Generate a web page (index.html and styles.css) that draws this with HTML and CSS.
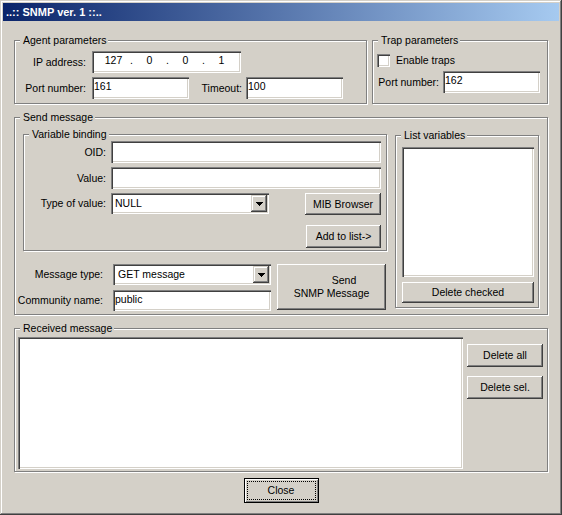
FILE: index.html
```html
<!DOCTYPE html>
<html lang="en">
<head>
    <meta charset="UTF-8">
    <title>SNMP ver. 1</title>
    <link rel="stylesheet" href="styles.css">
</head>
<body>
    <div class="window">
        <div class="titlebar">..:: SNMP ver. 1 ::..</div>
        <div class="client">
            <div class="top-row">
                <div class="group agent">
                    <span class="legend">Agent parameters</span>
                    <div class="row ip-row">
                        <span class="label lbl-agent">IP address:</span>
                        <div class="edit ip">
                            <span class="oct">127</span><span class="dot">.</span><span class="oct">0</span><span class="dot">.</span><span class="oct">0</span><span class="dot">.</span><span class="oct">1</span>
                        </div>
                    </div>
                    <div class="row">
                        <span class="label lbl-agent">Port number:</span>
                        <div class="edit port">161</div>
                        <span class="label lbl-timeout">Timeout:</span>
                        <div class="edit port">100</div>
                    </div>
                </div>
                <div class="group trap">
                    <span class="legend">Trap parameters</span>
                    <div class="row check-row">
                        <span class="checkbox"></span>
                        <span>Enable traps</span>
                    </div>
                    <div class="row">
                        <span class="label lbl-trap">Port number:</span>
                        <div class="edit port">162</div>
                    </div>
                </div>
            </div>

            <div class="group send">
                <span class="legend">Send message</span>
                <div class="send-left">
                    <div class="group binding">
                        <span class="legend">Variable binding</span>
                        <div class="row gap4">
                            <span class="label lbl-bind">OID:</span>
                            <div class="edit wide"></div>
                        </div>
                        <div class="row gap4">
                            <span class="label lbl-bind">Value:</span>
                            <div class="edit wide"></div>
                        </div>
                        <div class="row top">
                            <span class="label lbl-bind type-label">Type of value:</span>
                            <div class="combo">
                                <span class="combo-text">NULL</span>
                                <span class="combo-btn"><svg width="7" height="4" viewBox="0 0 7 4" shape-rendering="crispEdges"><rect x="0" y="0" width="7" height="1"/><rect x="1" y="1" width="5" height="1"/><rect x="2" y="2" width="3" height="1"/><rect x="3" y="3" width="1" height="1"/></svg></span>
                            </div>
                            <div class="button mib-btn">MIB Browser</div>
                        </div>
                        <div class="button add-btn">Add to list-&gt;</div>
                    </div>
                    <div class="msg-area">
                        <div class="msg-fields">
                            <div class="row gap5">
                                <span class="label lbl-msg">Message type:</span>
                                <div class="combo">
                                    <span class="combo-text msg-text">GET message</span>
                                    <span class="combo-btn"><svg width="7" height="4" viewBox="0 0 7 4" shape-rendering="crispEdges"><rect x="0" y="0" width="7" height="1"/><rect x="1" y="1" width="5" height="1"/><rect x="2" y="2" width="3" height="1"/><rect x="3" y="3" width="1" height="1"/></svg></span>
                                </div>
                            </div>
                            <div class="row">
                                <span class="label lbl-msg">Community name:</span>
                                <div class="edit community">public</div>
                            </div>
                        </div>
                        <div class="button send-btn">
                            <div class="send-lines">
                                <span class="send-first">Send</span>
                                <span>SNMP Message</span>
                            </div>
                        </div>
                    </div>
                </div>
                <div class="group list-vars">
                    <span class="legend">List variables</span>
                    <div class="listbox"></div>
                    <div class="button del-checked">Delete checked</div>
                </div>
            </div>

            <div class="group received">
                <span class="legend">Received message</span>
                <div class="edit message-box"></div>
                <div class="received-buttons">
                    <div class="button side-btn">Delete all</div>
                    <div class="button side-btn second">Delete sel.</div>
                </div>
            </div>

            <div class="button close-btn"><span class="focus">Close</span></div>
        </div>
    </div>
</body>
</html>
```

FILE: styles.css
```css
* {
    box-sizing: border-box;
}

body {
    margin: 0;
    background-color: #d4d0c8;
    font-family: "Liberation Sans", Arial, sans-serif;
    font-size: 10.5px;
    line-height: 13px;
    color: #000;
    white-space: nowrap;
}

.window {
    width: 562px;
    height: 515px;
    padding: 3px;
    background-color: #d4d0c8;
    box-shadow: inset -1px -1px 0 #404040, inset 1px 1px 0 #d4d0c8,
                inset -2px -2px 0 #808080, inset 2px 2px 0 #fff;
}

.titlebar {
    height: 18px;
    margin-bottom: 1px;
    padding-left: 3px;
    line-height: 18px;
    font-size: 11px;
    font-weight: bold;
    color: #fff;
    background: linear-gradient(to right, #0a246a, #a6caf0);
}

.client {
    padding: 18px 11px 0;
}

/* group boxes */
.group {
    position: relative;
    border: 1px solid #808080;
    box-shadow: inset 1px 1px 0 #fff, 1px 1px 0 #fff;
}

.legend {
    position: absolute;
    top: -7px;
    left: 5px;
    padding: 0 2px 0 3px;
    background-color: #d4d0c8;
}

.row {
    display: flex;
    align-items: center;
}

.row.top {
    align-items: flex-start;
}

.label {
    text-align: right;
}

.edit {
    height: 22px;
    padding: 3px 2px 0;
    background-color: #fff;
    box-shadow: inset 1px 1px 0 #808080, inset 2px 2px 0 #404040,
                inset -1px -1px 0 #fff, inset -2px -2px 0 #d4d0c8;
}

.button {
    display: flex;
    align-items: center;
    justify-content: center;
    background-color: #d4d0c8;
    box-shadow: inset -1px -1px 0 #404040, inset 1px 1px 0 #fff,
                inset -2px -2px 0 #808080, inset 2px 2px 0 #d4d0c8;
}

.combo {
    display: flex;
    width: 158px;
    height: 21px;
    padding: 2px;
    background-color: #fff;
    box-shadow: inset 1px 1px 0 #808080, inset 2px 2px 0 #404040,
                inset -1px -1px 0 #fff, inset -2px -2px 0 #d4d0c8;
}

.combo-text {
    flex: 1;
    padding: 2px 0 0 2px;
}

.msg-text {
    padding-left: 3px;
}

.combo-btn {
    display: flex;
    align-items: center;
    justify-content: center;
    width: 16px;
    height: 17px;
    padding-top: 1px;
    background-color: #d4d0c8;
    box-shadow: inset -1px -1px 0 #404040, inset 1px 1px 0 #d4d0c8,
                inset -2px -2px 0 #808080, inset 2px 2px 0 #fff;
}

.combo-btn svg {
    fill: #000;
}

/* agent parameters */
.top-row {
    display: flex;
    gap: 5px;
}

.agent {
    width: 353px;
    height: 64px;
    padding-top: 10px;
}

.ip-row {
    margin-bottom: 4px;
}

.lbl-agent {
    width: 71px;
    margin-right: 6px;
}

.ip {
    display: flex;
    width: 149px;
    padding-left: 6px;
}

.oct {
    width: 31px;
    text-align: center;
}

.dot {
    width: 5px;
    text-align: center;
}

.port {
    width: 97px;
}

.lbl-timeout {
    width: 53px;
    margin-right: 4px;
}

/* trap parameters */
.trap {
    width: 176px;
    height: 64px;
    padding-top: 13px;
}

.check-row {
    margin: 0 0 4px 4px;
}

.checkbox {
    width: 13px;
    height: 13px;
    margin-right: 6px;
    background-color: #fff;
    box-shadow: inset 1px 1px 0 #808080, inset 2px 2px 0 #404040,
                inset -1px -1px 0 #fff, inset -2px -2px 0 #d4d0c8;
}

.lbl-trap {
    width: 66px;
    margin-right: 4px;
}

/* send message */
.send {
    display: flex;
    align-items: flex-start;
    width: 534px;
    height: 198px;
    margin-top: 13px;
}

.send-left {
    display: flex;
    flex-direction: column;
    width: 372px;
}

.binding {
    width: 364px;
    height: 117px;
    margin: 16px 0 0 8px;
    padding-top: 6px;
}

.gap4 {
    margin-bottom: 4px;
}

.gap5 {
    margin-bottom: 5px;
}

.lbl-bind {
    width: 82px;
    margin-right: 5px;
}

.wide {
    width: 270px;
}

.type-label {
    line-height: 21px;
}

.mib-btn {
    width: 76px;
    height: 22px;
    margin-left: 36px;
}

.add-btn {
    width: 75px;
    height: 23px;
    margin: 10px 5px 0 auto;
}

.msg-area {
    display: flex;
    margin-top: 13px;
}

.lbl-msg {
    width: 88px;
    margin-right: 10px;
}

.community {
    width: 158px;
    height: 21px;
}

.send-btn {
    width: 109px;
    height: 46px;
    margin-left: 6px;
}

.send-lines {
    text-align: center;
}

.send-lines span {
    display: block;
}

.send-first {
    padding-left: 25px;
}

.list-vars {
    width: 144px;
    height: 173px;
    margin: 17px 0 0 8px;
    padding: 11px 0 0 6px;
}

.listbox {
    width: 132px;
    height: 130px;
    background-color: #fff;
    box-shadow: inset 1px 1px 0 #808080, inset 2px 2px 0 #404040,
                inset -1px -1px 0 #fff, inset -2px -2px 0 #d4d0c8;
}

.del-checked {
    width: 132px;
    height: 21px;
    margin-top: 5px;
}

/* received message */
.received {
    display: flex;
    align-items: flex-start;
    width: 534px;
    height: 144px;
    margin-top: 13px;
    padding: 8px 0 0 3px;
}

.message-box {
    width: 445px;
    height: 132px;
}

.received-buttons {
    margin: 7px 0 0 4px;
}

.side-btn {
    width: 76px;
    height: 23px;
}

.side-btn.second {
    margin-top: 9px;
}

.close-btn {
    width: 75px;
    height: 25px;
    margin: 6px auto 0;
    padding: 2px;
    border: 1px solid #000;
    box-shadow: inset 1px 1px 0 #fff, inset -1px -1px 0 #808080;
}

.focus {
    display: flex;
    align-items: center;
    justify-content: center;
    width: 100%;
    height: 100%;
    border: 1px dotted #000;
}
```
